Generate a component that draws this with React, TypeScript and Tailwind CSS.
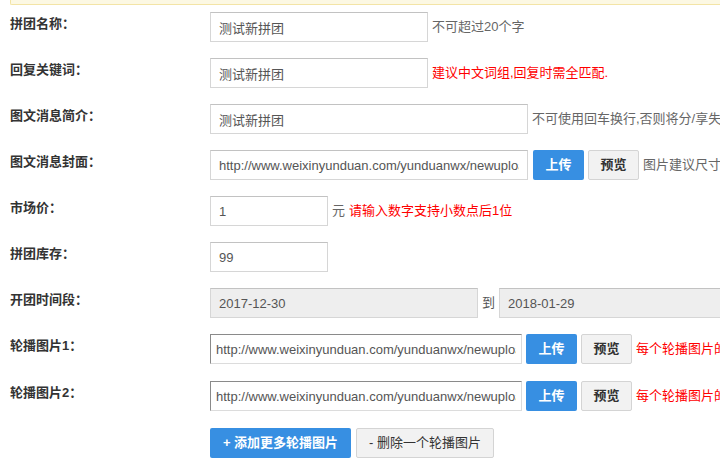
import type { ReactNode } from "react";

const font = "font-['Liberation_Sans','Noto_Sans_CJK_SC',sans-serif]";

const longUrl =
  "http://www.weixinyunduan.com/yunduanwx/newuploads/201712/pintuan_cover.jpg";

function Row({ label, children, className = "" }: { label: string; children: ReactNode; className?: string }) {
  return (
    <div className={`flex h-[30px] ${className}`}>
      <label className="w-[210px] shrink-0 pl-[10px] pt-[2px] text-[13px] font-bold leading-5 text-[#333]">
        {label}
      </label>
      <div className="flex items-center gap-1 whitespace-nowrap">{children}</div>
    </div>
  );
}

function TextInput({
  value,
  width,
  disabled = false,
  inset = false,
}: {
  value: string;
  width: string;
  disabled?: boolean;
  inset?: boolean;
}) {
  const border = inset
    ? "border-t-[#8a8a8a] border-l-[#8a8a8a] border-b-[#dcdcdc] border-r-[#dcdcdc] px-[5px]"
    : "border-[#d6d6d6] border-t-[#c2c2c2] px-[8px]";
  return (
    <input
      className={`${width} h-[30px] shrink-0 border text-[13px] text-[#555] outline-none ${border} ${
        disabled ? "bg-[#eeeeee]" : "bg-white"
      }`}
      defaultValue={value}
      readOnly={disabled}
      type="text"
    />
  );
}

function UploadButtons() {
  return (
    <>
      <button
        className="h-[30px] w-[51px] shrink-0 rounded-[2px] bg-[#378fe2] text-[13px] font-bold text-white"
        type="button"
      >
        上传
      </button>
      <button
        className="h-[30px] w-[51px] shrink-0 rounded-[2px] border border-[#d4d4d4] bg-[#f2f2f2] text-[13px] font-bold text-[#333]"
        type="button"
      >
        预览
      </button>
    </>
  );
}

export default function App() {
  return (
    <div className={`relative h-[472px] w-[720px] overflow-hidden bg-white ${font}`}>
      <div className="ml-[10px] h-[5px] rounded-bl-[2px] border-b border-l border-[#f3e4a6] bg-[#fcf8e3]" />

      <div className="mt-[7px] flex flex-col gap-4">
        <Row label="拼团名称：">
          <TextInput value="测试新拼团" width="w-[218px]" />
          <span className="text-[13px] text-[#666]">不可超过20个字</span>
        </Row>

        <Row label="回复关键词：">
          <TextInput value="测试新拼团" width="w-[218px]" />
          <span className="text-[13px] text-[#ff0000]">建议中文词组,回复时需全匹配.</span>
        </Row>

        <Row label="图文消息简介：">
          <TextInput value="测试新拼团" width="w-[318px]" />
          <span className="text-[13px] text-[#666]">不可使用回车换行,否则将分/享失效</span>
        </Row>

        <Row label="图文消息封面：">
          <TextInput value={longUrl} width="w-[318px]" />
          <div className="ml-px flex gap-1">
            <UploadButtons />
          </div>
          <span className="text-[13px] text-[#666]">图片建议尺寸720*400</span>
        </Row>

        <Row label="市场价：">
          <TextInput value="1" width="w-[118px]" />
          <span className="text-[13px] text-[#666]">元</span>
          <span className="text-[13px] text-[#ff0000]">请输入数字支持小数点后1位</span>
        </Row>

        <Row label="拼团库存：">
          <TextInput value="99" width="w-[118px]" />
        </Row>

        <Row label="开团时间段：">
          <TextInput value="2017-12-30" width="w-[268px]" disabled />
          <span className="text-[13px] text-[#555]">到</span>
          <TextInput value="2018-01-29" width="w-[260px]" disabled />
        </Row>

        <Row label="轮播图片1：">
          <TextInput value={longUrl} width="w-[312px]" inset />
          <UploadButtons />
          <span className="text-[13px] text-[#ff0000]">每个轮播图片的尺寸建议</span>
        </Row>

        <Row label="轮播图片2：" className="mt-px">
          <TextInput value={longUrl} width="w-[312px]" inset />
          <UploadButtons />
          <span className="text-[13px] text-[#ff0000]">每个轮播图片的尺寸建议</span>
        </Row>

        <div className="mt-px flex h-[30px] pl-[210px]">
          <button
            className="h-[30px] w-[141px] shrink-0 rounded-[2px] bg-[#378fe2] text-[13px] font-bold text-white"
            type="button"
          >
            + 添加更多轮播图片
          </button>
          <button
            className="ml-[5px] h-[30px] w-[138px] shrink-0 rounded-[2px] border border-[#d4d4d4] bg-[#f2f2f2] text-[13px] text-[#333]"
            type="button"
          >
            - 删除一个轮播图片
          </button>
        </div>
      </div>
    </div>
  );
}
